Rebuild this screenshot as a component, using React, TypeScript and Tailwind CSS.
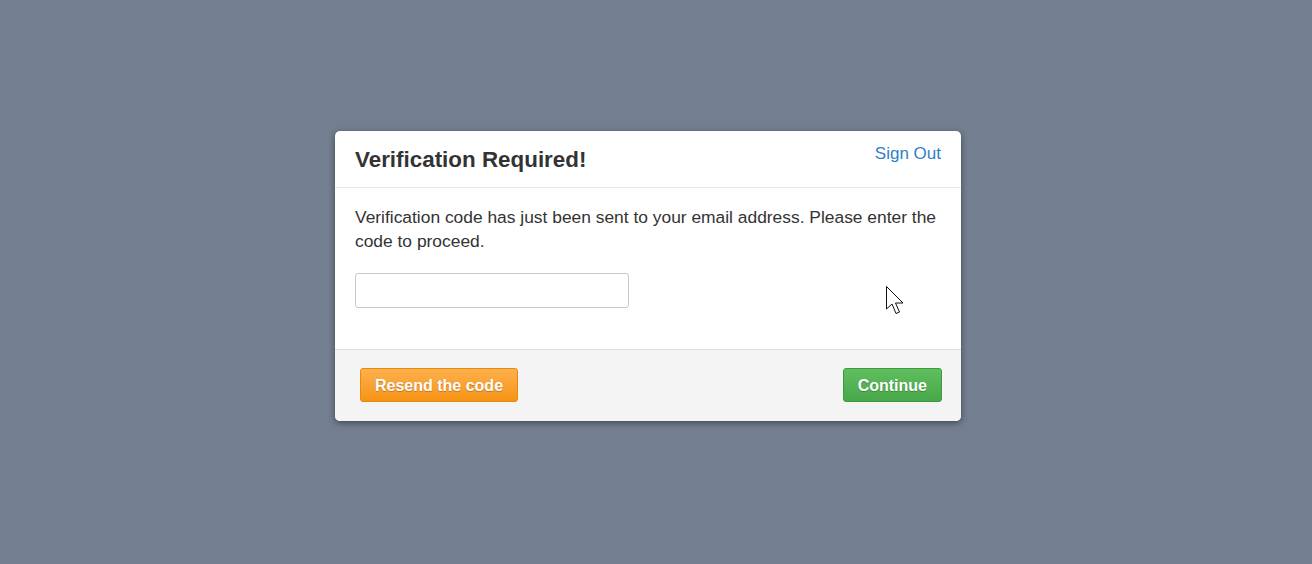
import React, { useState } from 'react';

// Cursor arrow drawn over the card, as in the screenshot
function Cursor() {
    return (
        <svg
            className="absolute left-[550px] top-[154px]"
            width="22"
            height="32"
            viewBox="0 0 22 32"
        >
            <path
                d="M1.5 1.5 L1.5 24 L7 19 L11 28.5 L14.5 27 L10.5 18 L18 18 Z"
                fill="#ffffff"
                stroke="#111111"
                strokeWidth="1"
                strokeLinejoin="miter"
            />
        </svg>
    );
}

export default function App() {
    const [code, setCode] = useState('');

    return (
        <div className="w-full h-[564px] bg-[#737f90] flex justify-center pt-[131px] pr-4 font-['Liberation_Sans',Arial,sans-serif] text-[#333333]">
            <div className="relative w-[626px] h-[290px] bg-white rounded-[5px] shadow-[0_2px_6px_rgba(0,0,0,0.45)] flex flex-col overflow-hidden">
                {/* header */}
                <div className="h-[57px] border-b border-[#e8e8e8] flex justify-between px-5">
                    <h1 className="text-[22.4px] font-bold leading-none pt-[18px]">Verification Required!</h1>
                    <a href="#" className="text-[17px] text-[#2f80c8] leading-none pt-[14px]">
                        Sign Out
                    </a>
                </div>

                {/* body */}
                <div className="flex-1 px-5 pt-[17px]">
                    <p className="text-[17.4px] leading-[24px]">
                        Verification code has just been sent to your email address. Please enter the code to proceed.
                    </p>
                    <input
                        type="text"
                        value={code}
                        onChange={(e) => setCode(e.target.value)}
                        className="mt-[20px] w-[274px] h-[35px] border border-[#c8c8c8] rounded-[3px] px-2 text-[15px] outline-none"
                    />
                </div>

                {/* footer */}
                <div className="h-[72px] border-t border-[#dcdcdc] bg-[#f4f4f4] flex justify-between items-start pt-[18px] pl-[25px] pr-[19px]">
                    <button className="h-[34px] px-[14px] pt-[1px] rounded-[3px] border border-[#e8890c] bg-gradient-to-b from-[#fdb04a] to-[#f7940f] text-white font-bold text-[16px] [text-shadow:0_1px_1px_rgba(0,0,0,0.25)]">
                        Resend the code
                    </button>
                    <button className="h-[34px] px-[14px] pt-[1px] rounded-[3px] border border-[#3f9a3f] bg-gradient-to-b from-[#5fbf5f] to-[#48a748] text-white font-bold text-[16px] [text-shadow:0_1px_1px_rgba(0,0,0,0.25)]">
                        Continue
                    </button>
                </div>

                <Cursor />
            </div>
        </div>
    );
}
